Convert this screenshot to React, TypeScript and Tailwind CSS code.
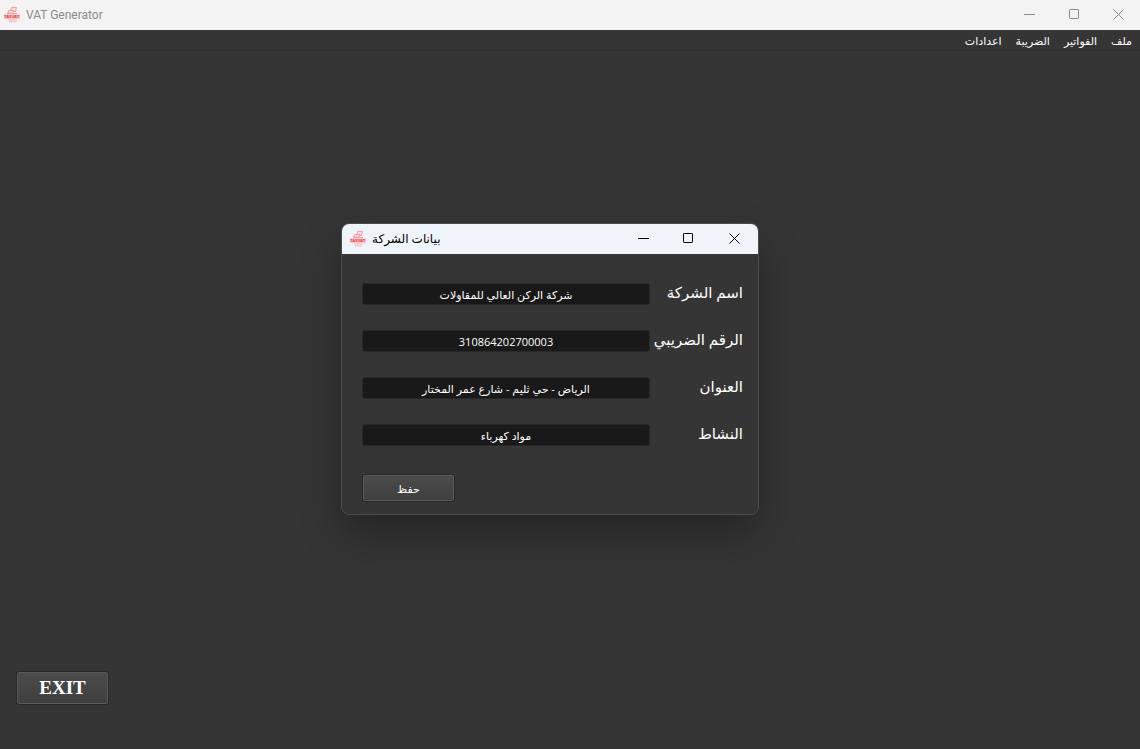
import { useState } from "react";

const MENUS = ["ملف", "الفواتير", "الضريبة", "اعدادات"];

const FIELDS = [
  { id: "company", label: "اسم الشركة", value: "شركة الركن العالي للمقاولات" },
  { id: "vat", label: "الرقم الضريبي", value: "310864202700003" },
  { id: "address", label: "العنوان", value: "الرياض - حي ثليم - شارع عمر المختار" },
  { id: "activity", label: "النشاط", value: "مواد كهرباء" },
];

function AppIcon() {
  return (
    <svg viewBox="0 0 16 16" className="w-4 h-4 shrink-0" aria-hidden="true">
      <path d="M7.5 .5h5l-.9 4h-5z" fill="#fbdcdc" stroke="#f58e8e" strokeWidth=".8" />
      <path d="M4.5 3.5h5l-.7 2.7h-5z" fill="#fbdcdc" stroke="#f58e8e" strokeWidth=".8" />
      <path d="M3 6.6h10" stroke="#f7a3a3" strokeWidth="1" />
      <path d="M0 7.5h16v4.3H0z" fill="#fbbcbc" />
      <text x="0" y="11.4" fontSize="4" fontWeight="bold" fill="#ee3f3f" fontFamily="Liberation Sans, sans-serif">TAXVAT</text>
      <path d="M4 13h9M5 14.8h7" stroke="#f8b6b6" strokeWidth="1" />
    </svg>
  );
}

function WindowButtons({ closeClass }: { closeClass: string }) {
  const btn = "flex items-center justify-center h-full pb-[2px]";
  return (
    <div className="flex h-full">
      <button type="button" aria-label="Minimize" className={`${btn} w-[45px]`}>
        <svg width="11" height="11" viewBox="0 0 11 11" fill="none" stroke="currentColor">
          <path d="M0 5.5h11" />
        </svg>
      </button>
      <button type="button" aria-label="Maximize" className={`${btn} w-[45px]`}>
        <svg width="11" height="11" viewBox="0 0 11 11" fill="none" stroke="currentColor">
          <rect x=".5" y=".5" width="9" height="9" rx=".6" />
        </svg>
      </button>
      <button type="button" aria-label="Close" className={`${btn} ${closeClass}`}>
        <svg width="11" height="11" viewBox="0 0 11 11" fill="none" stroke="currentColor">
          <path d="M.5 .5l10 10M10.5 .5l-10 10" />
        </svg>
      </button>
    </div>
  );
}

function CompanyDialog() {
  const [values, setValues] = useState(FIELDS.map((f) => f.value));
  return (
    <section
      role="dialog"
      aria-labelledby="dialog-title"
      className="absolute left-[341px] top-[223px] w-[418px] rounded-lg border border-[#4b4b4b] bg-[#353535] overflow-hidden shadow-[0_20px_40px_rgba(0,0,0,0.3)]"
    >
      <header className="flex items-center justify-between h-[30px] pl-2 bg-[#eff4fb] text-black">
        <div className="flex items-center gap-[6px]">
          <AppIcon />
          <h2 id="dialog-title" dir="rtl" className="text-[12px]">بيانات الشركة</h2>
        </div>
        <WindowButtons closeClass="w-[47px]" />
      </header>

      <form dir="rtl" className="pt-7 pb-3 pr-[15px] pl-5" onSubmit={(e) => e.preventDefault()}>
        <div className="space-y-[23px]">
          {FIELDS.map((f, i) => (
            <div key={f.id} className="flex items-center h-6">
              <label htmlFor={f.id} className="w-[93px] text-[15px] leading-6 pb-1 text-white whitespace-nowrap">
                {f.label}
              </label>
              <input
                id={f.id}
                value={values[i]}
                onChange={(e) => setValues(values.map((v, j) => (j === i ? e.target.value : v)))}
                className="flex-1 min-w-0 h-[22px] rounded-[3px] border border-[#282828] bg-[#191919] text-center text-[11px] text-white outline-none"
              />
            </div>
          ))}
        </div>
        <div className="flex justify-end mt-[27px]">
          <button
            type="submit"
            className="w-[93px] h-7 pt-[2px] rounded-[3px] border border-[#272727] bg-linear-to-b from-[#4b4b4b] to-[#3f3f3f] text-[11px] text-white shadow-[inset_0_0_0_1px_#5a5a5a]"
          >
            حفظ
          </button>
        </div>
      </form>
    </section>
  );
}

export default function App() {
  return (
    <div className="relative min-h-screen flex flex-col bg-[#353535] font-['Open_Sans','DejaVu_Sans',sans-serif]">
      <header className="flex items-center justify-between h-[30px] pl-1 bg-[#f3f3f3] text-[#8b8b8b]">
        <div className="flex items-center gap-[6px]">
          <AppIcon />
          <h1 className="font-[Roboto,sans-serif] text-[12px]">VAT Generator</h1>
        </div>
        <WindowButtons closeClass="w-[43px]" />
      </header>

      <nav dir="rtl" className="flex items-center gap-[14px] h-[21px] px-2 pt-[2px] border-b border-[#303030] text-[11px] text-white">
        {MENUS.map((m) => (
          <button key={m} type="button">{m}</button>
        ))}
      </nav>

      <main className="flex-1 flex flex-col justify-end items-start px-4 pb-11">
        <button
          type="button"
          className="w-[93px] h-[34px] rounded-[3px] border border-[#272727] bg-linear-to-b from-[#4b4b4b] to-[#3f3f3f] font-['Liberation_Serif',serif] text-[19px] font-bold text-white shadow-[inset_0_0_0_1px_#5a5a5a]"
        >
          EXIT
        </button>
      </main>

      <CompanyDialog />
    </div>
  );
}
